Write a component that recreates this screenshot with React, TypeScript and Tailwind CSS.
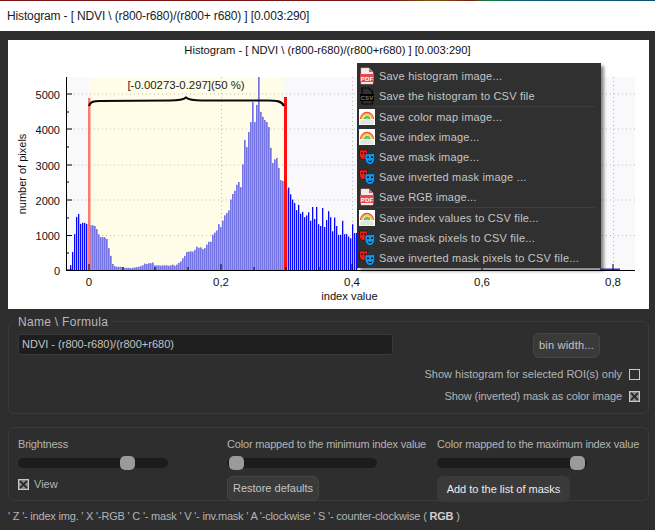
import React from "react";

const FONT = "'Liberation Sans', Arial, sans-serif";

// bar heights of the histogram, one every 2px starting at x = 70
const BINS = [
  140, 510, 1020, 1510, 1590, 1310, 1340, 1340, 1310, 1280, 1270, 1270, 1250, 1160, 1010, 930, 930, 930, 880, 620,
  400, 170, 110, 90, 90, 90, 80, 60, 60, 60, 50, 60, 70, 80, 90, 110, 130, 180, 170, 190,
  190, 210, 130, 130, 130, 120, 130, 130, 130, 120, 130, 150, 120, 150, 200, 240, 330, 400, 510, 520,
  530, 520, 570, 660, 630, 640, 590, 620, 720, 800, 800, 1000, 1060, 1120, 1300, 1220, 1400, 1550, 1620, 1690,
  2000, 2160, 2250, 2420, 2500, 2350, 3000, 3690, 3490, 3920, 4200, 4770, 4200, 4690, 5480, 4490, 4350, 4260, 4200, 4060,
  3470, 3040, 3140, 3180, 2900, 2550, 2530, 2400, 2280, 2340, 2150, 2000, 1900, 1700, 1850, 1600, 1650, 1500, 1550, 1640,
  1400, 1790, 1450, 1790, 1300, 1250, 1760, 1220, 1420, 1670, 1500, 1100, 1490, 1250, 1000, 1000, 1400, 1020, 1020, 950,
  900, 1300, 1050, 1050,
];

const Y_TICKS = [
  { label: "5000", y: 94 },
  { label: "4000", y: 129 },
  { label: "3000", y: 165 },
  { label: "2000", y: 200 },
  { label: "1000", y: 235.5 },
  { label: "0", y: 270 },
];

const X_TICKS = [
  { label: "0", x: 89 },
  { label: "0,2", x: 221 },
  { label: "0,4", x: 352 },
  { label: "0,6", x: 482 },
  { label: "0,8", x: 613 },
];

function Chart() {
  const toY = (v: number) => 270 - (v * 35.2) / 1000;
  return (
    <svg width={641} height={268} viewBox="8 40 641 268" className="block" fontFamily={FONT}>
      <rect x={66} y={77} width={569} height={193} fill="#f9f9fb" />
      <rect x={89} y={77} width={195} height={193} fill="#fffde8" />
      {Y_TICKS.slice(0, 5).map((t) => (
        <line key={t.label} x1={66} x2={635} y1={t.y} y2={t.y} stroke="#bdbdb5" strokeDasharray="1 3" />
      ))}
      {X_TICKS.slice(1).map((t) => (
        <line key={t.label} x1={t.x + 0.5} x2={t.x + 0.5} y1={77} y2={270} stroke="#bdbdb5" strokeDasharray="1 3" />
      ))}
      {BINS.map((v, i) => {
        const x = 70 + i * 2;
        const inside = x >= 90 && x < 284;
        return inside ? (
          <g key={x}>
            <rect x={x} y={toY(v)} width={2} height={270 - toY(v)} fill="#9c9cee" />
            <rect x={x} y={toY(v)} width={1} height={270 - toY(v)} fill="#7474e4" />
          </g>
        ) : (
          <rect key={x} x={x} y={toY(v)} width={1.3} height={270 - toY(v)} fill="#0808fa" />
        );
      })}
      <rect x={600} y={268.5} width={20} height={1.5} fill="#3030e0" />
      <rect x={88} y={98} width={2.5} height={172} fill="#ff7a6c" />
      <rect x={284} y={97} width={3} height={173} fill="#ff1010" />
      <path
        d="M89 106 C90 102 93 101 100 101 L170 100.5 C178 100.5 183 100 186 97.5 C189 100 194 100.5 202 100.5 L268 100.5 C276 100.5 282 101 284 106"
        fill="none"
        stroke="#0a0a0a"
        strokeWidth={2.2}
      />
      <line x1={66.5} x2={66.5} y1={77} y2={270} stroke="#000" />
      <line x1={66} x2={635} y1={270.5} y2={270.5} stroke="#000" />
      {Y_TICKS.map((t) => (
        <line key={t.label} x1={66} x2={72} y1={t.y} y2={t.y} stroke="#000" />
      ))}
      {[112, 147, 182, 218, 253].map((y) => (
        <line key={y} x1={66} x2={69} y1={y} y2={y} stroke="#000" />
      ))}
      {[123, 155, 188, 254, 286, 319].map((x) => (
        <line key={x} x1={x} x2={x} y1={267} y2={270} stroke="#000" />
      ))}
      {X_TICKS.map((t) => (
        <line key={t.label} x1={t.x} x2={t.x} y1={264} y2={270} stroke="#000" />
      ))}
      {Y_TICKS.map((t) => (
        <text key={t.label} x={60} y={t.y + 4.5} textAnchor="end" fontSize={11} fill="#111">
          {t.label}
        </text>
      ))}
      {X_TICKS.map((t) => (
        <text key={t.label} x={t.x} y={285.5} textAnchor="middle" fontSize={11.5} fill="#111">
          {t.label}
        </text>
      ))}
      <text x={327.5} y={54} textAnchor="middle" fontSize={11.2} fill="#111">
        Histogram - [ NDVI \ (r800-r680)/(r800+r680) ] [0.003:290]
      </text>
      <text x={186} y={89} textAnchor="middle" fontSize={11.4} fill="#222">
        [-0.00273-0.297](50 %)
      </text>
      <text x={349.5} y={300} textAnchor="middle" fontSize={11.2} fill="#111">
        index value
      </text>
      <text transform="translate(26 174) rotate(-90)" textAnchor="middle" fontSize={11} fill="#111">
        number of pixels
      </text>
    </svg>
  );
}

function PdfIcon() {
  return (
    <svg width={16} height={18} viewBox="0 0 16 18">
      <path d="M2 1 H10 L14 5 V17 H2 Z" fill="#fbe9e9" stroke="#e8b4b4" strokeWidth={0.5} />
      <path d="M10 1 L14 5 H10 Z" fill="#e25560" />
      <rect x={1} y={7} width={14} height={8} fill="#e04a56" />
      <text x={8} y={13.5} textAnchor="middle" fontSize={6} fontWeight={700} fill="#fff" fontFamily={FONT}>
        PDF
      </text>
    </svg>
  );
}

function CsvIcon() {
  return (
    <svg width={16} height={18} viewBox="0 0 16 18">
      <path d="M3 1 H10 L13.5 4.5 V17 H3 Z" fill="none" stroke="#050505" strokeWidth={1.2} />
      <rect x={1} y={7} width={14} height={7} fill="#050505" />
      <text x={8} y={12.7} textAnchor="middle" fontSize={6} fontWeight={700} fill="#777" fontFamily={FONT}>
        CSV
      </text>
    </svg>
  );
}

function RainbowIcon() {
  return (
    <svg width={16} height={16} viewBox="0 0 16 16">
      <rect width={16} height={16} fill="#fff" />
      <g fill="none" strokeWidth={1.3}>
        <path d="M1.5 10 A6.5 6.5 0 0 1 14.5 10" stroke="#ef4a4a" />
        <path d="M2.8 10 A5.2 5.2 0 0 1 13.2 10" stroke="#f6a623" />
        <path d="M4.1 10 A3.9 3.9 0 0 1 11.9 10" stroke="#f4e842" />
        <path d="M5.4 10 A2.6 2.6 0 0 1 10.6 10" stroke="#57c84d" />
        <path d="M6.6 10 A1.4 1.4 0 0 1 9.4 10" stroke="#3f8fe8" />
      </g>
      <path d="M1 14 C1 11 3 10 5 10.5 C7 9.5 10 9.5 11 10.5 C13 10 15 11 15 14 C15 15 14 15.5 13 15.5 H3 C2 15.5 1 15 1 14 Z" fill="#dfe8d8" />
    </svg>
  );
}

function MaskIcon() {
  return (
    <svg width={16} height={16} viewBox="0 0 16 16">
      <path d="M0.5 1 H8.5 V6 C8.5 9 6.5 10.5 4.5 10.5 C2.5 10.5 0.5 9 0.5 6 Z" fill="#e8201c" stroke="#300" strokeWidth={0.6} />
      <rect x={2} y={3.5} width={1.8} height={1.4} fill="#200" />
      <rect x={5.2} y={3.5} width={1.8} height={1.4} fill="#200" />
      <path d="M6 5 L15.5 4.5 V10 C15.5 13 13.5 15.5 11 15.5 C8.5 15.5 6.5 13 6 10 Z" fill="#1296e8" stroke="#024" strokeWidth={0.6} />
      <rect x={8} y={7.5} width={2} height={1.5} fill="#012" />
      <rect x={12} y={7.5} width={2} height={1.5} fill="#012" />
      <path d="M9 11.5 C10 13 12 13 13 11.5" fill="none" stroke="#012" strokeWidth={1} />
    </svg>
  );
}

type MenuEntry = { text: string; icon: React.ReactNode; sep?: boolean };

const MENU: MenuEntry[] = [
  { text: "Save histogram image...", icon: <PdfIcon /> },
  { text: "Save the histogram to CSV file", icon: <CsvIcon />, sep: true },
  { text: "Save color map image...", icon: <RainbowIcon /> },
  { text: "Save index image...", icon: <RainbowIcon /> },
  { text: "Save mask image...", icon: <MaskIcon /> },
  { text: "Save inverted mask image ...", icon: <MaskIcon /> },
  { text: "Save RGB image...", icon: <PdfIcon />, sep: true },
  { text: "Save index values to CSV file...", icon: <RainbowIcon /> },
  { text: "Save mask pixels to CSV file...", icon: <MaskIcon /> },
  { text: "Save inverted mask pixels to CSV file...", icon: <MaskIcon /> },
];

function ContextMenu() {
  return (
    <div className="absolute left-[349px] top-[23px] w-[244px] h-[205px] bg-[#303030] pt-[3px] shadow-[3px_3px_3px_rgba(0,0,0,0.45)]">
      {MENU.map((m) => (
        <React.Fragment key={m.text}>
          <div className="flex items-center h-[20px] pl-[2px] text-[11px] text-[#c4c4c4] tracking-[0.2px] whitespace-nowrap">
            <span className="flex items-center justify-center w-[16px] h-[18px] shrink-0">{m.icon}</span>
            <span className="ml-[4px]">{m.text}</span>
          </div>
          {m.sep && <div className="h-px ml-[18px] mr-[6px] bg-[#3d3d3d]" />}
        </React.Fragment>
      ))}
    </div>
  );
}

function CheckBox({ checked }: { checked?: boolean }) {
  return (
    <span className="block w-[11px] h-[11px] border border-[#c8c8c8] shrink-0">
      {checked && (
        <svg viewBox="0 0 9 9" className="block w-[9px] h-[9px] bg-[#8e8e8e]">
          <path d="M1 1 L8 8 M8 1 L1 8" stroke="#2a2a2a" strokeWidth={1.8} />
        </svg>
      )}
    </span>
  );
}

function Slider({ value }: { value: number }) {
  return (
    <div className="relative w-[150px] h-[10px] rounded-full bg-[#1c1c1c]">
      <div
        className="absolute top-[-2px] w-[15px] h-[14px] rounded-[5px] bg-[#9a9a9a]"
        style={{ left: value }}
      />
    </div>
  );
}

export default function App() {
  return (
    <div className="w-[655px] h-[530px] bg-[#2e2e2e] overflow-hidden text-[11px]" style={{ fontFamily: FONT }}>
      <div className="h-[31px] bg-white text-[12px] tracking-[-0.14px] text-[#1a1a2a]">
        <div className="h-px bg-[linear-gradient(90deg,#7a1515_0%,#7a1515_60%,#7a5a10_66%,#7a1a12_72%,#1a7a3a_74%,#0f5f78_80%,#0f5078_100%)]" />
        <div className="pl-[7px] pt-[5px] leading-[20px] whitespace-nowrap">
          Histogram - [ NDVI \ (r800-r680)/(r800+ r680) ] [0.003:290]
        </div>
      </div>

      <div className="pl-[8px] pr-[6px] pt-[9px]">
        <div className="relative h-[269px] bg-white">
          <Chart />
          <ContextMenu />
        </div>

        <div className="relative mt-[12px] h-[93px] border border-[#3a3a3a] rounded-md pl-[9px] pr-[8px] pt-[12px]">
          <div className="absolute left-[6px] top-[-8px] px-[3px] bg-[#2e2e2e] leading-[16px] text-[12px] tracking-[0.3px] text-[#b8b8b8]">
            Name \ Formula
          </div>
          <div className="flex items-start">
            <div className="w-[375px] h-[21px] bg-[#1e1e1e] border border-[#383838] rounded-[3px] pl-[3px] leading-[19px] text-[#c4c4c4]">
              NDVI - (r800-r680)/(r800+r680)
            </div>
            <div className="ml-[140px] -mt-[1px] w-[67px] h-[25px] bg-[#3a3a3a] border border-[#464646] rounded-md text-center leading-[23px] tracking-[0.2px] text-[#c4c4c4]">
              bin width...
            </div>
          </div>
          <div className="flex flex-col items-end gap-[11px] mt-[11px] text-[#b4b4b4]">
            <div className="flex items-center gap-[7px] h-[11px]">
              <span>Show histogram for selected ROI(s) only</span>
              <CheckBox />
            </div>
            <div className="flex items-center gap-[7px] h-[11px]">
              <span className="tracking-[-0.1px]">Show (inverted) mask as color image</span>
              <CheckBox checked />
            </div>
          </div>
        </div>

        <div className="mt-[13px] h-[74px] border border-[#3a3a3a] rounded-md pl-[9px] pt-[8px] flex text-[#b4b4b4]">
          <div className="w-[209px] shrink-0">
            <div className="leading-[16px] tracking-[-0.2px]">Brightness</div>
            <div className="mt-[6px]">
              <Slider value={102} />
            </div>
            <div className="flex items-center gap-[5px] mt-[8px]">
              <CheckBox checked />
              <span>View</span>
            </div>
          </div>
          <div className="w-[210px] shrink-0">
            <div className="leading-[16px] tracking-[-0.18px] whitespace-nowrap">
              Color mapped to the minimum index value
            </div>
            <div className="mt-[6px]">
              <Slider value={2} />
            </div>
            <div className="mt-[8px] w-[92px] h-[25px] bg-[#3a3a3a] border border-[#464646] rounded-md text-center leading-[23px] text-[#c4c4c4]">
              Restore defaults
            </div>
          </div>
          <div className="shrink-0">
            <div className="leading-[16px] tracking-[-0.18px] whitespace-nowrap">
              Color mapped to the maximum index value
            </div>
            <div className="mt-[6px]">
              <Slider value={133} />
            </div>
            <div className="mt-[8px] w-[133px] h-[26px] bg-[#3a3a3a] rounded-md text-center leading-[26px] text-[#ececec]">
              Add to the list of masks
            </div>
          </div>
        </div>

        <div className="mt-[7px] leading-[16px] tracking-[-0.2px] text-[#b4b4b4] whitespace-nowrap">
          ' Z '- index img. ' X '-RGB ' C '- mask ' V '- inv.mask ' A '-clockwise ' S '- counter-clockwise ({" "}
          <b className="text-[#d0d0d0]">RGB</b> )
        </div>
      </div>
    </div>
  );
}
